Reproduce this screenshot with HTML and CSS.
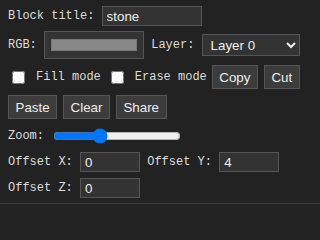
FILE: index.html
```html
<!DOCTYPE html>
<html lang="en">
  <head>
    <meta charset="utf-8" />
    <link rel="stylesheet" href="styles.css">
  </head>
  <body>

<div class="panel">

  <div class="row first">
    <label class="lbl" for="title">Block title:</label>
    <input class="field title" id="title" type="text" value="stone">
  </div>

  <div class="row">
    <label class="lbl" for="rgb">RGB:</label>
    <input class="rgb" id="rgb" type="color" value="#888888">
    <label class="lbl" for="layer">Layer:</label>
    <select class="layer" id="layer">
      <option>Layer 0</option>
      <option>Layer 1</option>
    </select>
  </div>

  <div class="row modes">
    <label class="check"><input type="checkbox" id="fill">Fill mode</label>
    <label class="check"><input type="checkbox" id="erase">Erase mode</label>
    <button class="btn copy">Copy</button>
    <button class="btn">Cut</button>
  </div>

  <div class="row buttons">
    <button class="btn">Paste</button>
    <button class="btn">Clear</button>
    <button class="btn">Share</button>
  </div>

  <div class="row zoom">
    <label class="lbl" for="zoom">Zoom:</label>
    <input class="slider" id="zoom" type="range" min="0" max="100" value="35">
  </div>

  <div class="row">
    <label class="lbl" for="offx">Offset X:</label>
    <input class="field num" id="offx" type="text" value="0">
    <label class="lbl" for="offy">Offset Y:</label>
    <input class="field num" id="offy" type="text" value="4">
  </div>

  <div class="row">
    <label class="lbl" for="offz">Offset Z:</label>
    <input class="field num" id="offz" type="text" value="0">
  </div>

</div>

  </body>
</html>
```

FILE: styles.css
```css
html{
	background-color: #222222;
}

body{
	margin: 0;
	font-family: "Liberation Mono", monospace;
	font-size: 12px;
	color: #dddddd;
}

.panel{
	display: flex;
	flex-direction: column;
	gap: 6px;
	padding: 6px 8px 5px 8px;
	border-bottom: 1px solid #3a3a3a;
	box-shadow: 0 1px 0 #2c2c2c;
}

.row{
	display: flex;
	align-items: center;
	gap: 0.6em;
}

.first{
	margin-bottom: -1px;
}

.lbl{
	white-space: pre;
}

.field{
	box-sizing: border-box;
	height: 20px;
	margin: 0;
	padding: 0 4px;
	background-color: #333333;
	color: #eeeeee;
	border: 1px solid #555555;
	font-family: "Liberation Sans", Arial, sans-serif;
	font-size: 13.33px;
	outline: none;
}

.title{
	width: 100px;
}

.num{
	width: 60px;
}

.rgb{
	box-sizing: border-box;
	width: 100px;
	height: 28px;
	margin: 0;
	padding: 0;
	background-color: #333333;
	border: 1px solid #555555;
}

.rgb::-webkit-color-swatch-wrapper{
	padding: 7px 6px;
}

.rgb::-webkit-color-swatch{
	border: 1px solid #777777;
}

.layer{
	box-sizing: border-box;
	width: 98px;
	height: 22px;
	margin: 0;
	padding: 0 4px;
	background-color: #333333;
	color: #eeeeee;
	border: 1px solid #555555;
	border-radius: 0;
	font-family: "Liberation Sans", Arial, sans-serif;
	font-size: 13.33px;
}

.modes{
	height: 24px;
}

.check{
	display: flex;
	align-items: center;
	gap: 11px;
	white-space: pre;
}

.check input{
	width: 13px;
	height: 13px;
	margin: 0;
}

.modes .check:first-child{
	margin-left: 4px;
}

.modes .check + .check{
	margin-left: 4px;
}

.modes .copy{
	margin-left: -1px;
}

.buttons,
.modes{
	column-gap: 6px;
}

.btn{
	box-sizing: border-box;
	height: 24px;
	margin: 0;
	padding: 0 6.5px;
	background-color: #3c3c3c;
	color: #eeeeee;
	border: 1px solid #555555;
	border-radius: 0;
	font-family: "Liberation Sans", Arial, sans-serif;
	font-size: 13.33px;
}

.zoom{
	height: 21px;
}

.slider{
	width: 128px;
	margin: 0 2px;
}
```
